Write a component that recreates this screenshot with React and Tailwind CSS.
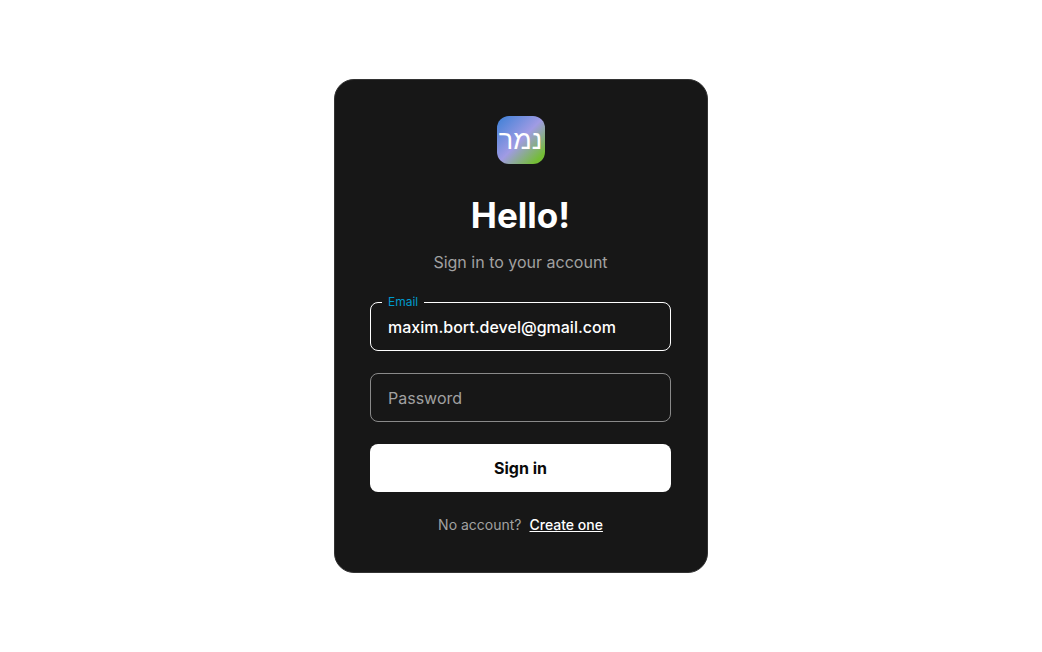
import { useState } from "react";

function Field({ id, label, type, value, onChange, autoComplete }) {
  const filled = value !== "";
  return (
    <div className="relative">
      <input
        id={id}
        type={type}
        value={value}
        onChange={(e) => onChange(e.target.value)}
        autoComplete={autoComplete}
        className={
          filled
            ? "block h-[49px] w-full rounded-lg border border-white bg-transparent px-[17px] text-base font-medium text-white outline-none"
            : "block h-[49px] w-full rounded-lg border border-[#8a8a8a] bg-transparent px-[17px] text-base font-medium text-white outline-none"
        }
      />
      <label
        htmlFor={id}
        className={
          filled
            ? "absolute -top-2 left-3 bg-[#171717] px-1.5 text-xs leading-4 text-[#0099cc]"
            : "absolute top-3 left-3 bg-[#171717] px-1.5 text-base leading-[26px] text-[#a1a1a1]"
        }
      >
        {label}
      </label>
    </div>
  );
}

export default function App() {
  const [email, setEmail] = useState("maxim.bort.devel@gmail.com");
  const [password, setPassword] = useState("");

  return (
    <main className="flex min-h-screen items-center justify-center bg-white font-['Inter',sans-serif]">
      <div className="w-full max-w-[374px] rounded-[20px] border border-[#333333] bg-[#171717] py-9 pr-9 pl-[35px]">
        <div className="mx-auto flex size-12 items-center justify-center rounded-xl bg-[linear-gradient(135deg,#3b7fd6_0%,#a09be4_50%,#74bd35_88%)]">
          <span lang="he" dir="rtl" className="font-['Liberation_Sans',sans-serif] text-[27px] leading-[44px] text-white">
            נמר
          </span>
        </div>
        <h1 className="mt-7 text-center text-[35px] leading-[46px] font-bold text-white">Hello!</h1>
        <p className="mt-3 text-center text-base leading-6 text-[#a1a1a1]">Sign in to your account</p>
        <form className="mt-7 flex flex-col gap-[22px]" onSubmit={(e) => e.preventDefault()}>
          <Field id="email" label="Email" type="email" value={email} onChange={setEmail} autoComplete="email" />
          <Field
            id="password"
            label="Password"
            type="password"
            value={password}
            onChange={setPassword}
            autoComplete="current-password"
          />
          <button type="submit" className="h-12 w-full cursor-pointer rounded-lg bg-white text-base font-bold text-[#0a0a0a]">
            Sign in
          </button>
        </form>
        <p className="mt-[22px] flex justify-center gap-2 text-sm leading-[22px] text-[#a1a1a1]">
          <span>No account?</span>
          <a href="#create" className="font-medium text-white underline">
            Create one
          </a>
        </p>
      </div>
    </main>
  );
}
